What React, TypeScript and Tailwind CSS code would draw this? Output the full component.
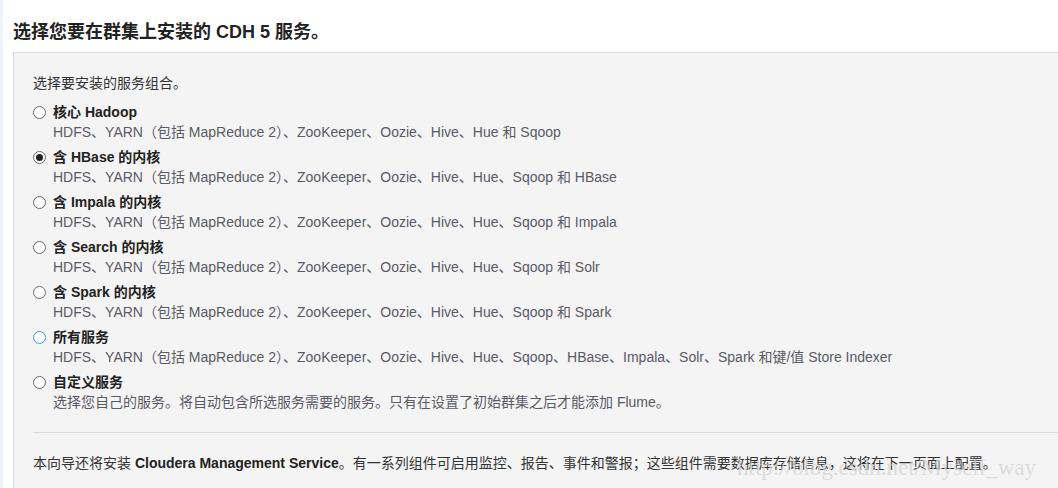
import React from 'react';

type Option = {
  title: React.ReactNode;
  desc: string;
  state?: 'checked' | 'hover';
};

const options: Option[] = [
  { title: <>核心 Hadoop</>, desc: 'HDFS、YARN（包括 MapReduce 2）、ZooKeeper、Oozie、Hive、Hue 和 Sqoop' },
  {
    title: <>含 HBase 的内核</>,
    desc: 'HDFS、YARN（包括 MapReduce 2）、ZooKeeper、Oozie、Hive、Hue、Sqoop 和 HBase',
    state: 'checked',
  },
  { title: <>含 Impala 的内核</>, desc: 'HDFS、YARN（包括 MapReduce 2）、ZooKeeper、Oozie、Hive、Hue、Sqoop 和 Impala' },
  { title: <>含 Search 的内核</>, desc: 'HDFS、YARN（包括 MapReduce 2）、ZooKeeper、Oozie、Hive、Hue、Sqoop 和 Solr' },
  { title: <>含 Spark 的内核</>, desc: 'HDFS、YARN（包括 MapReduce 2）、ZooKeeper、Oozie、Hive、Hue、Sqoop 和 Spark' },
  {
    title: <>所有服务</>,
    desc: 'HDFS、YARN（包括 MapReduce 2）、ZooKeeper、Oozie、Hive、Hue、Sqoop、HBase、Impala、Solr、Spark 和键/值 Store Indexer',
    state: 'hover',
  },
  { title: <>自定义服务</>, desc: '选择您自己的服务。将自动包含所选服务需要的服务。只有在设置了初始群集之后才能添加 Flume。' },
];

function Radio({ state }: { state?: 'checked' | 'hover' }) {
  const border = state === 'hover' ? 'border-[#3c97f0]' : 'border-[#6b6b6b]';
  return (
    <span
      className={`flex h-[13px] w-[13px] shrink-0 items-center justify-center rounded-full border bg-white ${border}`}
    >
      {state === 'checked' && <span className="h-[7px] w-[7px] rounded-full bg-[#222]" />}
    </span>
  );
}

export default function App() {
  return (
    <div
      className="relative flex h-[488px] w-[1058px] overflow-hidden bg-white text-[#333]"
      style={{ fontFamily: '"Liberation Sans", Arial, "Noto Sans CJK SC", sans-serif' }}
    >
      <div className="w-[3px] shrink-0 bg-[#eef2f9]" />
      <div className="flex flex-1 flex-col pl-[10px]">
        <h1 className="pt-[21px] text-[18px] leading-[22px] font-bold text-[#222]">
          选择您要在群集上安装的 CDH 5 服务。
        </h1>
        <div className="mt-[9px] flex-1 border-t border-l border-[#dcdcdc] bg-[#f4f4f4] pl-[19px]">
          <p className="pt-[21px] text-[14px] leading-[18px] text-[#333]">选择要安装的服务组合。</p>
          <div className="mt-[10px] flex flex-col gap-[5px]">
            {options.map((o, i) => (
              <div key={i} className="flex flex-col">
                <div className="flex h-[20px] items-center gap-[7px]">
                  <Radio state={o.state} />
                  <span className="text-[14px] font-bold text-[#222]">{o.title}</span>
                </div>
                <div className="pl-[20px] text-[14px] leading-[20px] text-[#5a5a66]">{o.desc}</div>
              </div>
            ))}
          </div>
          <div className="mt-[20px] border-t border-[#dcdcdc]" />
          <p className="mt-[20px] text-[14px] leading-[20px] text-[#333]">
            本向导还将安装 <b className="text-[#222]">Cloudera Management Service</b>
            。有一系列组件可启用监控、报告、事件和警报；这些组件需要数据库存储信息，这将在下一页面上配置。
          </p>
        </div>
      </div>
      <span
        className="pointer-events-none absolute top-[456px] left-[737px] text-[23px] leading-[24px] text-[#d6d6d6]/80"
        style={{ fontFamily: '"Liberation Serif", serif' }}
      >
        http://blog.csdn.net/Myself_way
      </span>
    </div>
  );
}
